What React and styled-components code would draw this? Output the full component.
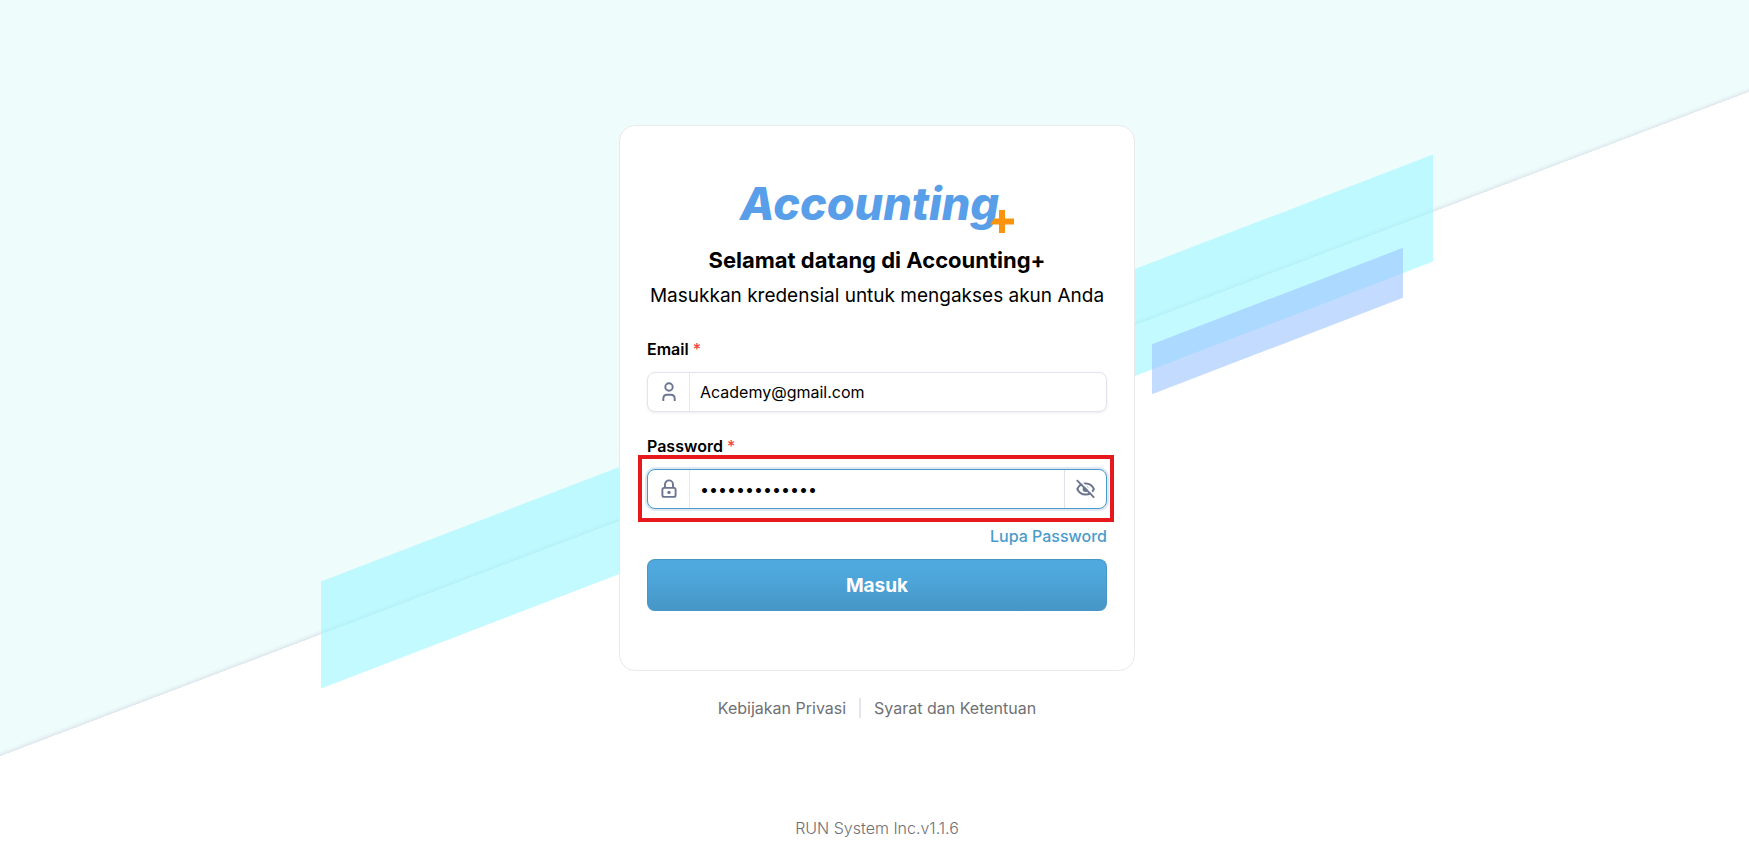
import React from "react";
import styled, { createGlobalStyle } from "styled-components";

const GlobalStyle = createGlobalStyle`
  *, *::before, *::after { box-sizing: border-box; }
  body {
    margin: 0;
    background: #fff;
    color: #000;
    font-family: Inter, "Liberation Sans", sans-serif;
    font-size: 16px;
    line-height: 24px;
  }
  button, input { font: inherit; color: inherit; }
`;

const Page = styled.div`
  position: relative;
  overflow: hidden;
  min-height: 100vh;
  display: flex;
  flex-direction: column;
  align-items: center;
  padding: 125px 0 6px 5px;
`;

const Backdrop = styled.div`
  position: absolute;
  inset: 0;
  overflow: hidden;
`;

const Slope = styled.div`
  position: absolute;
  inset: -100% -20px 50%;
  transform: skewY(-20.8deg);
  background: #effcfc;
  box-shadow: inset 0 -1px 4px rgba(40, 20, 70, 0.14);
`;

const Band = styled.div`
  position: absolute;
  left: calc(50% + ${(p) => p.$x}px);
  top: calc(50% + ${(p) => p.$y}px);
  width: ${(p) => p.$w}px;
  height: ${(p) => p.$h}px;
  background: ${(p) => p.$color};
  opacity: 0.62;
  transform: skewY(-21deg);
`;

const Card = styled.main`
  position: relative;
  width: 100%;
  max-width: 516px;
  padding: 50px 27px 59px;
  background: #fff;
  border: 1px solid #e9e9ec;
  border-radius: 16px;
`;

const Logo = styled.div`
  position: relative;
  width: 274px;
  margin: 0 auto;
  color: #589ee9;
  font-size: 45px;
  font-style: italic;
  font-weight: 800;
  line-height: 56px;
`;

const LogoPlus = styled.svg`
  position: absolute;
  right: 0;
  bottom: -1px;
`;

const Title = styled.h1`
  margin: 12px 0 0;
  font-size: 22px;
  font-weight: 700;
  line-height: 32px;
  text-align: center;
`;

const Subtitle = styled.p`
  margin: 4px 0 25px;
  font-size: 19px;
  line-height: 32px;
  text-align: center;
  white-space: nowrap;
`;

const Field = styled.div`
  display: flex;
  flex-direction: column;
  gap: 11px;
  margin-bottom: 22px;
`;

const Label = styled.label`
  font-weight: 600;
`;

const Required = styled.span`
  color: #ef4444;
  font-weight: 500;
`;

const InputBox = styled.div`
  position: relative;
  display: flex;
  height: 40px;
  background: #fff;
  border: 1px solid ${(p) => (p.$active ? "#4a9bcb" : "#e4e4ec")};
  border-radius: 8px;
  box-shadow: ${(p) => (p.$active ? "0 0 0 2px #dfe7f3" : "0 1px 3px rgba(0, 0, 0, 0.08)")};
`;

const Slot = styled.span`
  flex: none;
  width: 42px;
  display: grid;
  place-items: center;
  color: #6b7590;
  border-right: 1px solid #e8e8f0;
`;

const ToggleButton = styled.button`
  flex: none;
  width: 42px;
  padding: 0;
  display: grid;
  place-items: center;
  color: #6b7590;
  background: none;
  border: 0;
  border-left: 1px solid #e0e0ea;
`;

const TextInput = styled.input`
  flex: 1;
  min-width: 0;
  padding: 0 10px;
  background: none;
  border: 0;
  outline: 0;
`;

const Highlight = styled.div`
  position: absolute;
  inset: -15px -8px -14px -10px;
  border: 4px solid #e8191c;
  pointer-events: none;
`;

const ForgotRow = styled.div`
  display: flex;
  justify-content: flex-end;
  margin: -7px 0 11px;
`;

const ForgotLink = styled.a`
  color: #4a9bcb;
  font-weight: 500;
  text-decoration: none;
`;

const SubmitButton = styled.button`
  display: block;
  width: 100%;
  height: 52px;
  color: #fff;
  font-size: 19px;
  font-weight: 700;
  background: linear-gradient(#4fa9de 20%, #4696c6);
  border: 1px solid #4696c6;
  border-bottom: 0;
  border-radius: 8px;
`;

const Links = styled.nav`
  position: relative;
  display: flex;
  align-items: center;
  gap: 13px;
  margin-top: 25px;
`;

const FooterLink = styled.a`
  color: #707074;
  text-decoration: none;
`;

const Divider = styled.span`
  width: 2px;
  height: 20px;
  background: #e4e4ea;
`;

const Version = styled.footer`
  position: relative;
  margin-top: 96px;
  color: #707074;
  font-weight: 300;
`;

const iconProps = {
  width: 20,
  height: 20,
  viewBox: "0 0 20 20",
  fill: "none",
  stroke: "currentColor",
  strokeWidth: 1.9,
  "aria-hidden": true,
};

const UserIcon = () => (
  <svg {...iconProps}>
    <circle cx="10" cy="5" r="3.700" />
    <path d="M4.300 19V16.800C4.300 14.300 6 12.700 8.300 12.700h3.400c2.300 0 4 1.600 4 4.100V19" />
  </svg>
);

const LockIcon = () => (
  <svg {...iconProps}>
    <rect x="3.400" y="8.900" width="13.200" height="9" rx="1.600" />
    <path d="M6 8.900V5.400a4 4 0 0 1 8 0v3.500" />
    <circle cx="10" cy="13.400" r="1.700" fill="currentColor" stroke="none" />
  </svg>
);

const EyeOffIcon = () => (
  <svg {...iconProps}>
    <path d="M1.300 10C3 6.200 6.200 4.500 9.600 4.500S16.200 6.200 17.900 10C16.200 13.800 13 15.500 9.600 15.500S3 13.800 1.300 10Z" />
    <circle cx="9.600" cy="10" r="3" fill="currentColor" stroke="none" />
    <path d="M2.100 -0.100L19.500 17.300" stroke="#fff" strokeWidth="1.700" />
    <path d="M0.800 1.200L18.200 18.600" />
  </svg>
);

export default function App() {
  return (
    <Page>
      <GlobalStyle />
      <Backdrop aria-hidden="true">
        <Slope />
        <Band $x={-554} $y={-56} $w={1112} $h={107} $color="#9ef7ff" />
        <Band $x={277} $y={-128} $w={251} $h={50} $color="#9ec5ff" />
      </Backdrop>
      <Card>
        <Logo>
          Accounting
          <LogoPlus width="24" height="23" viewBox="0 0 24 23" aria-hidden="true">
            <path d="M9 0h6v8.500h9v6h-9V23H9v-8.500H0L4 8.500h5z" fill="#fa930e" />
          </LogoPlus>
        </Logo>
        <Title>Selamat datang di Accounting+</Title>
        <Subtitle>Masukkan kredensial untuk mengakses akun Anda</Subtitle>
        <form onSubmit={(e) => e.preventDefault()}>
          <Field>
            <Label htmlFor="email">
              Email <Required>*</Required>
            </Label>
            <InputBox>
              <Slot><UserIcon /></Slot>
              <TextInput id="email" type="email" defaultValue="Academy@gmail.com" />
            </InputBox>
          </Field>
          <Field>
            <Label htmlFor="password">
              Password <Required>*</Required>
            </Label>
            <InputBox $active>
              <Slot><LockIcon /></Slot>
              <TextInput id="password" type="password" defaultValue="academy123456" />
              <ToggleButton type="button" aria-label="Tampilkan password">
                <EyeOffIcon />
              </ToggleButton>
              <Highlight />
            </InputBox>
          </Field>
          <ForgotRow>
            <ForgotLink href="#lupa-password">Lupa Password</ForgotLink>
          </ForgotRow>
          <SubmitButton type="submit">Masuk</SubmitButton>
        </form>
      </Card>
      <Links>
        <FooterLink href="#privasi">Kebijakan Privasi</FooterLink>
        <Divider />
        <FooterLink href="#syarat">Syarat dan Ketentuan</FooterLink>
      </Links>
      <Version>RUN System Inc.v1.1.6</Version>
    </Page>
  );
}
